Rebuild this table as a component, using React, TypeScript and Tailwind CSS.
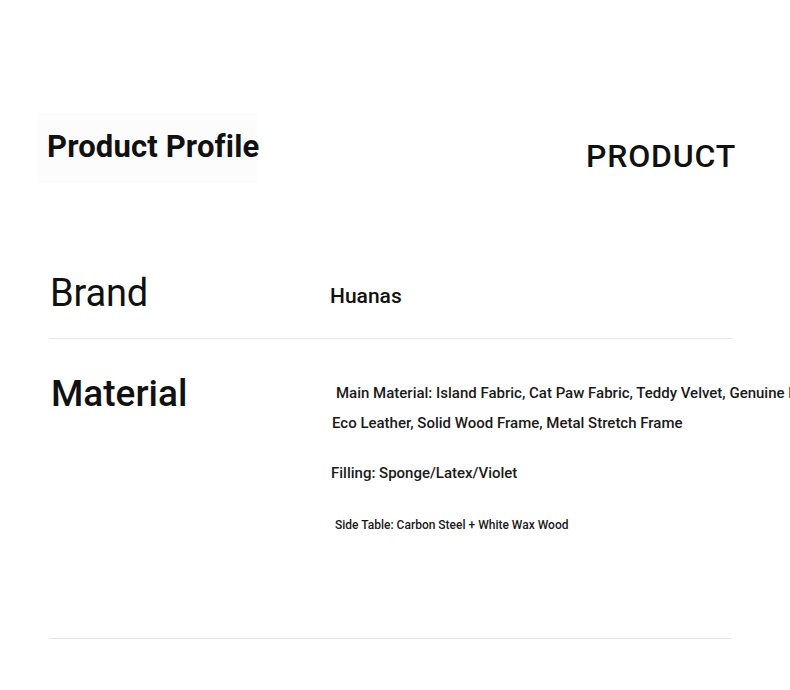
import React from 'react';

const App: React.FC = () => {
  return (
    <div className="w-[790px] h-[690px] overflow-hidden bg-white text-[#111] font-['Roboto',_'Liberation_Sans',_sans-serif]">
      {/* heading */}
      <header className="flex items-start justify-between pl-[37px] pr-[54px] pt-[113px]">
        <div className="w-[220px] bg-[#fcfcfc] px-[10px] pt-[18px] pb-[21px]">
          <h1 className="whitespace-nowrap text-[31px] font-bold leading-none tracking-[0.15px]">Product Profile</h1>
        </div>
        <div className="pt-[27px] text-[32px] font-medium leading-none tracking-[0.8px]">PRODUCT</div>
      </header>

      <div className="mx-[49px] mt-[89px] w-[683px]">
        {/* brand */}
        <div className="flex items-start pt-[2px] pb-[26px] border-b border-[#e6e6e6]">
          <div className="w-[281px] pl-[1px] text-[38px] leading-none tracking-[-0.2px]">Brand</div>
          <div className="mt-[12px] text-[21px] font-medium leading-none">Huanas</div>
        </div>

        {/* material */}
        <div className="flex items-start pt-[36px] pb-[107px] border-b border-[#e6e6e6]">
          <div className="w-[281px] shrink-0 pl-[2px] text-[37px] font-medium leading-none">Material</div>
          <div className="flex flex-col pt-[11px] font-medium leading-none text-[#1a1a1a]">
            <p className="pl-[6px] text-[15px] whitespace-nowrap">
              Main Material: Island Fabric, Cat Paw Fabric, Teddy Velvet, Genuine Leather,
            </p>
            <p className="mt-[15px] pl-[2px] text-[15px] whitespace-nowrap">
              Eco Leather, Solid Wood Frame, Metal Stretch Frame
            </p>
            <p className="mt-[35px] pl-[1px] text-[15px]">Filling: Sponge/Latex/Violet</p>
            <p className="mt-[38px] pl-[5px] text-[12px]">Side Table: Carbon Steel + White Wax Wood</p>
          </div>
        </div>
      </div>
    </div>
  );
};

export default App;
